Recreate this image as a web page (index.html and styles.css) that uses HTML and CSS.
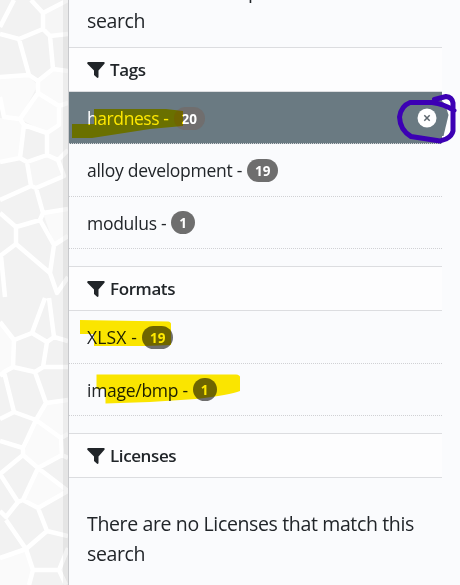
FILE: index.html
```html
<!DOCTYPE html>
<html lang="en">
<head>
<meta charset="utf-8">
<title>Filters</title>
<link rel="stylesheet" href="styles.css">
</head>
<body>
<svg class="mosaic" width="68" height="585" viewBox="0 0 68 585" aria-hidden="true">
  <path class="pale" d="M38 93L59 106V125L47 133L20 119ZM0 77H29L38 85L20 119H4L0 97ZM0 118L20 119L24 125L20 158L0 162ZM53 69L68 71V103L59 106L38 93V81ZM36 420L46 403L68 400V434L61 438L62 455L38 468L23 455ZM38 468L68 491L38 508L23 500ZM0 322L14 340L13 367L0 374ZM43 213L68 209V236L54 245ZM0 558L26 549L33 570L29 585H0Z"/>
  <path class="mid" d="M43 13L68 0V34L50 36L43 29ZM27 162L47 155L58 160L64 176L36 188L31 186ZM59 106L68 103V150L58 160L47 155V133L60 127Z"/>
  <path class="vein" d="M14 0L0 27M31 0L43 13L68 0M43 13V29L19 39L0 34M43 29L50 36L68 34M50 36L53 69L68 71M19 39L29 75L0 77M29 75L38 81L53 69M38 81V93L59 106V125L47 133L24 125L20 119L38 93M0 97L4 117L20 119M24 125L20 158L0 162M20 158L27 162L47 155V133M59 106L68 103M47 155L58 160L68 150M58 160L64 176L36 188L31 186L0 200M27 162L31 186M36 188L43 213L68 209M43 213L40 220L16 227L0 213M16 227V244L0 256M16 244L50 273L54 245L40 220M54 245L68 236M50 273L57 293L68 277M1 256L5 297M45 298L32 333L14 340L0 322M49 298L54 337L68 341M32 333L47 342L54 337M47 342L43 367L35 372L13 367L14 340M43 367H68M13 367L4 372L0 376M4 372L14 412L0 419M35 372L46 403L68 400M46 403L36 420L14 412M36 420L23 448L0 441M36 420L61 438L62 455L38 468L23 455V448M61 438L68 434M62 455L68 458M23 455L0 474L18 502L23 500L38 468L68 491L38 508L23 500M18 502L6 517L0 511M6 520L26 549L0 558M38 508L47 531L26 549L33 570L29 585M47 531L68 536M33 570H59L68 548M59 570L66 585"/>
  <path class="shade" d="M63 0h5v585h-5z"/>
</svg>
<main class="panel">
  <p class="empty first">There are no Groups that match this<br>search</p>
  <section>
    <h2><svg class="funnel" viewBox="0 0 18 16"><path d="M1 0H17Q18.5 1 17 2.3L11.5 8.5V15Q11 16.5 9.8 15.5L7 13V8.5L.8 2.3Q-.5 1 1 0Z"/></svg><span>Tags</span></h2>
    <ul>
      <li class="active"><span class="name tight">hardness -</span><span class="badge faded">20</span><span class="close"><svg viewBox="0 0 20 20"><circle cx="10" cy="10" r="9.5"/><path d="M7.3 7.3L12.7 12.7M12.7 7.3L7.3 12.7"/></svg></span></li>
      <li><span class="name">alloy development -</span><span class="badge">19</span></li>
      <li><span class="name">modulus -</span><span class="badge">1</span></li>
    </ul>
  </section>
  <section>
    <h2><svg class="funnel" viewBox="0 0 18 16"><path d="M1 0H17Q18.5 1 17 2.3L11.5 8.5V15Q11 16.5 9.8 15.5L7 13V8.5L.8 2.3Q-.5 1 1 0Z"/></svg><span>Formats</span></h2>
    <ul>
      <li><span class="name wide">XLSX -</span><span class="badge">19</span></li>
      <li><span class="name">image/bmp -</span><span class="badge">1</span></li>
    </ul>
  </section>
  <section>
    <h2><svg class="funnel" viewBox="0 0 18 16"><path d="M1 0H17Q18.5 1 17 2.3L11.5 8.5V15Q11 16.5 9.8 15.5L7 13V8.5L.8 2.3Q-.5 1 1 0Z"/></svg><span>Licenses</span></h2>
    <p class="empty">There are no Licenses that match this<br>search</p>
  </section>
</main>
<svg class="ink marker" width="460" height="585" viewBox="0 0 460 585" aria-hidden="true">
  <path d="M94 109H166L183 111V126L150 129L92 138H72V124H94Z"/>
  <path d="M80 320L168 321.500Q171 322 171 324V345L145 346H94V334H80Z"/>
  <path d="M96.500 374.500H236Q240 375 240 377V391Q230 395 196 399L150 402L105.500 403.500V389H96.500Z"/>
</svg>
<svg class="ink pen" width="460" height="585" viewBox="0 0 460 585" aria-hidden="true">
  <path class="gap" d="M442 98L451 100V132L442 138L449 115Z"/>
  <path class="bar" d="M441 100L445 104L448.500 115L443.500 136H441Z"/>
  <path class="loop" d="M434.500 99.500L446 96.500Q452 97 453 103V131Q452 136 446 139L440 141L411 136.500Q400 130 399.500 117Q401 106 410 102.500L432 102.500Q444 104 454 110.500"/>
</svg>
</body>
</html>
```
FILE: styles.css
```css
* { box-sizing: border-box; }
body {
  margin: 0;
  width: 460px;
  height: 585px;
  overflow: hidden;
  display: flex;
  position: relative;
  background: #fafbfd;
  color: #212529;
  font-family: "Open Sans", "Noto Sans", sans-serif;
}
.mosaic { flex: none; display: block; background: #f2f2f2; }
.pale { fill: #fafafa; }
.mid { fill: #f6f6f6; }
.vein { fill: none; stroke: #fff; stroke-width: 4.5; stroke-linejoin: round; }
.shade { fill: #000; opacity: .05; }
.panel {
  flex: none;
  width: 374px;
  height: 585px;
  overflow: hidden;
  border-left: 1px solid #c8c9cc;
}
.empty {
  margin: 0;
  padding: 31px 0 0 18px;
  font-size: 19.5px;
  line-height: 30px;
  letter-spacing: -.36px;
  white-space: nowrap;
}
.first { height: 71px; margin-top: -24px; padding-top: 0; }
h2 {
  display: flex;
  align-items: center;
  gap: 5px;
  height: 45px;
  margin: 0;
  padding-left: 18px;
  border: solid #dcdde0;
  border-width: 1px 0;
  background: #fdfdfe;
  font-size: 17px;
  font-weight: 600;
  letter-spacing: -.4px;
}
.funnel { width: 18px; height: 16px; fill: #212529; }
ul { list-style: none; margin: 0 0 17.5px; padding: 0; }
li {
  display: flex;
  align-items: center;
  height: 52.25px;
  padding-left: 18px;
  border-bottom: 1px dotted #d0d1d4;
  font-size: 17.5px;
  letter-spacing: -.28px;
}
.active { background: #6a7a82; color: #fff; }
.name { white-space: nowrap; padding-top: 1px; }
.tight { letter-spacing: -.42px; }
.wide { letter-spacing: .15px; }
.badge {
  margin: 1px 0 0 5px;
  height: 23px;
  padding: 0 8px;
  border-radius: 12px;
  background: #6e6e6e;
  color: #fff;
  font-size: 13.5px;
  font-weight: 700;
  line-height: 24px;
  letter-spacing: 0;
}
.faded { background: #706e6e; }
.close { margin-left: auto; margin-right: 5px; width: 20px; height: 20px; }
.close svg { display: block; width: 20px; height: 20px; }
.close circle { fill: #fff; }
.close path { fill: none; stroke: #5c666d; stroke-width: 1.5; }
.ink { position: absolute; left: 0; top: 0; pointer-events: none; }
.marker { mix-blend-mode: multiply; fill: #ffe900; }
.gap { fill: #fff; }
.bar { fill: #6a7a82; }
.loop { fill: none; stroke: #3c00b4; stroke-width: 5; stroke-linecap: round; stroke-linejoin: round; }
```
